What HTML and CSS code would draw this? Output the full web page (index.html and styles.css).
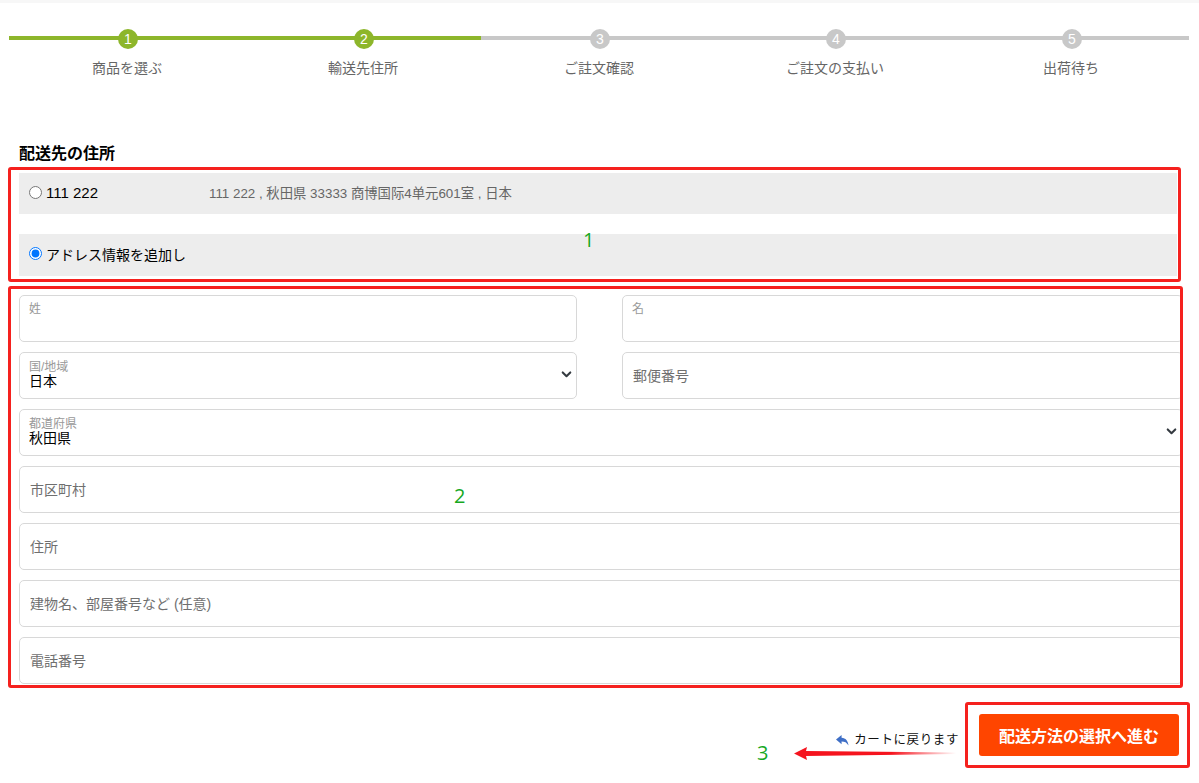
FILE: index.html
```html
<!DOCTYPE html>
<html lang="ja">
<head>
<meta charset="utf-8">
<title>配送先の住所</title>
<link rel="stylesheet" href="styles.css">
</head>
<body>
<div class="topband"></div>
<ol class="steps">
  <li class="step done"><span class="dot">1</span><span class="step-label">商品を選ぶ</span></li>
  <li class="step done"><span class="dot">2</span><span class="step-label">輸送先住所</span></li>
  <li class="step"><span class="dot">3</span><span class="step-label">ご註文確認</span></li>
  <li class="step"><span class="dot">4</span><span class="step-label">ご註文の支払い</span></li>
  <li class="step"><span class="dot">5</span><span class="step-label">出荷待ち</span></li>
</ol>
<main class="content">
  <h2 class="title">配送先の住所</h2>
  <div class="choices">
    <label class="choice">
      <input type="radio" name="addr">
      <span class="choice-name">111 222</span>
      <span class="choice-addr">111 222 , 秋田県 33333 商博国际4单元601室 , 日本</span>
    </label>
    <label class="choice add">
      <input type="radio" name="addr" checked>
      <span>アドレス情報を追加し</span>
    </label>
  </div>
  <form class="form">
    <div class="pair">
      <div class="field"><span class="small">姓</span><input class="input" type="text"></div>
      <div class="field"><span class="small">名</span><input class="input" type="text"></div>
    </div>
    <div class="pair">
      <div class="field"><span class="small low">国/地域</span>
        <select class="select"><option>日本</option></select>
        <svg class="chev" viewBox="0 0 16 16"><path d="M2.5 5l5.5 5.5L13.500 5" fill="none" stroke="#343a40" stroke-width="3" stroke-linecap="round" stroke-linejoin="round"/></svg>
      </div>
      <div class="field"><input class="input plain" type="text" placeholder="郵便番号"></div>
    </div>
    <div class="field"><span class="small low">都道府県</span>
      <select class="select"><option>秋田県</option></select>
      <svg class="chev wide" viewBox="0 0 16 16"><path d="M2.5 5l5.5 5.5L13.500 5" fill="none" stroke="#343a40" stroke-width="3" stroke-linecap="round" stroke-linejoin="round"/></svg>
    </div>
    <div class="field"><input class="input plain" type="text" placeholder="市区町村"></div>
    <div class="field"><input class="input plain" type="text" placeholder="住所"></div>
    <div class="field"><input class="input plain" type="text" placeholder="建物名、部屋番号など (任意)"></div>
    <div class="field"><input class="input plain" type="text" placeholder="電話番号"></div>
  </form>
  <div class="actions">
    <a class="back" href="#">
      <svg class="back-icon" viewBox="0 0 16 14"><path d="M7 1L1 6l6 5V8c3.500 0 5.500 1 7.500 4.500C14 7.500 11.500 4.200 7 4z" fill="#3f6fc6"/></svg>
      <span>カートに戻ります</span>
    </a>
    <button class="next" type="button">配送方法の選択へ進む</button>
  </div>
</main>

<div class="mark mark-1"></div>
<div class="mark mark-2"></div>
<div class="mark mark-3"></div>
<span class="num num-1">1</span>
<span class="num num-2">2</span>
<span class="num num-3">3</span>
<svg class="red-arrow" viewBox="0 0 162 14">
  <defs>
    <linearGradient id="fade" x1="0" x2="1" y1="0" y2="0">
      <stop offset="0" stop-color="#f5141e"/>
      <stop offset="0.6" stop-color="#f5141e"/>
      <stop offset="1" stop-color="#f5141e" stop-opacity="0"/>
    </linearGradient>
  </defs>
  <path d="M0 7.500L13 1l-1 4L162 6.500v1.500L12 10l1 4z" fill="url(#fade)"/>
</svg>
</body>
</html>
```
FILE: styles.css
```css
* { box-sizing: border-box; }
html, body { margin: 0; padding: 0; }
body {
  width: 1199px;
  height: 783px;
  overflow: hidden;
  position: relative;
  background: #fff;
  font-family: "Liberation Sans", "Noto Sans CJK JP", sans-serif;
  font-size: 14px;
  color: #000;
}
.topband { height: 3px; background: #f7f7f7; }

.steps {
  list-style: none;
  display: flex;
  margin: 26px 0 0 9px;
  padding: 0;
  width: 1180px;
}
.step {
  position: relative;
  flex: 1 1 0;
  display: flex;
  flex-direction: column;
  align-items: center;
  color: #666;
}
.step::before {
  content: "";
  position: absolute;
  left: 0;
  right: 0;
  top: 7px;
  height: 4px;
  background: #c8c8c8;
}
.step.done::before { background: #8db62b; }
.dot {
  position: relative;
  width: 20px;
  height: 20px;
  margin-left: 2px;
  border-radius: 50%;
  background: #c8c8c8;
  color: #fff;
  font-size: 14px;
  line-height: 20px;
  text-align: center;
}
.done .dot { background: #8db62b; }
.step-label {
  margin-top: 9px;
  font-size: 14px;
  line-height: 20px;
  color: #666;
}

.content { padding: 0 0 0 19px; }
.title {
  margin: 64px 0 0;
  font-size: 16px;
  line-height: 24px;
  font-weight: 700;
  color: #000;
}
.choices {
  display: flex;
  flex-direction: column;
  gap: 20px;
  margin-top: 7px;
  width: 1158px;
}
.choice {
  display: flex;
  align-items: center;
  height: 41px;
  background: #ededed;
  padding: 0 0 2px 10px;
  color: #000;
}
.choice.add { height: 42px; padding-bottom: 3px; }
.choice input {
  margin: 0 4px 0 0;
  width: 13px;
  height: 13px;
  accent-color: #0075ff;
}
.choice-name { width: 163px; font-size: 15px; }
.choice-addr { font-size: 13.350px; color: #666; }

.form {
  display: flex;
  flex-direction: column;
  gap: 10px;
  margin-top: 19px;
  width: 1164px;
}
.pair {
  display: grid;
  grid-template-columns: 558px 561px;
  column-gap: 45px;
}
.field {
  position: relative;
  height: 47px;
  border: 1px solid #d8d8d8;
  border-radius: 5px;
  background: #fff;
}
.small {
  position: absolute;
  left: 9px;
  top: 6px;
  font-size: 12px;
  line-height: 14px;
  color: #999;
}
.small.low { top: 7px; }
.input {
  display: block;
  width: 100%;
  height: 100%;
  border: 0;
  outline: 0;
  background: transparent;
  padding: 0 10px;
  font: inherit;
  color: #000;
}
.input.plain { padding-top: 1px; }
.input::placeholder { color: #6f6f6f; opacity: 1; }
.select {
  appearance: none;
  display: block;
  width: 100%;
  height: 100%;
  border: 0;
  outline: 0;
  background: transparent;
  padding: 11px 30px 0 9px;
  font: inherit;
  color: #000;
}
.chev {
  position: absolute;
  right: 4px;
  top: 16px;
  width: 11px;
  height: 11px;
}
.chev.wide { right: 5px; }

.actions {
  display: flex;
  justify-content: flex-end;
  align-items: flex-start;
  gap: 20px;
  margin-top: 30px;
  padding-right: 20px;
}
.back {
  display: flex;
  align-items: center;
  gap: 4px;
  margin-top: 17px;
  font-size: 12.500px;
  line-height: 18px;
  letter-spacing: 0.600px;
  color: #111;
  text-decoration: none;
}
.back-icon { width: 15px; height: 13px; }
.next {
  width: 200px;
  height: 42px;
  border: 0;
  border-radius: 3px;
  background: #ff4500;
  color: #fff;
  font-family: "Liberation Serif", "Noto Sans CJK JP", serif;
  font-size: 16px;
  font-weight: 700;
}

.mark {
  position: absolute;
  border: 3px solid #f5211e;
  border-radius: 3px;
  pointer-events: none;
}
.mark-1 { left: 8px; top: 167px; width: 1173px; height: 115px; }
.mark-2 { left: 8px; top: 286px; width: 1175px; height: 402px; }
.mark-3 { left: 965px; top: 702px; width: 225px; height: 66px; }
.num {
  position: absolute;
  font-family: "Open Sans", sans-serif;
  font-size: 20px;
  line-height: 24px;
  color: #17a81f;
}
.num-1 { left: 583px; top: 228px; }
.num-2 { left: 454px; top: 484px; }
.num-3 { left: 757px; top: 741px; }
.red-arrow {
  position: absolute;
  left: 794px;
  top: 746px;
  width: 162px;
  height: 14px;
}
```
